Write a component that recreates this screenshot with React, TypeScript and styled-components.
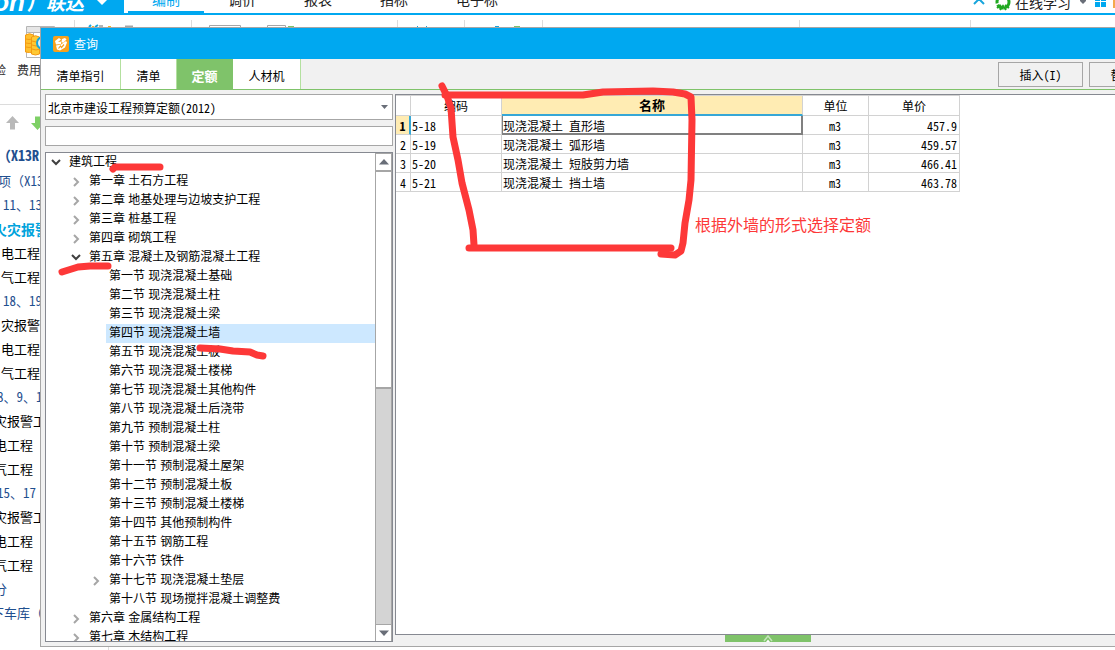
import React from "react";
import styled, { createGlobalStyle, css } from "styled-components";

const BLUE = "#00a8f0";
const GREEN = "#7fc36a";
const LINE = "#a6a6a6";
const DARK_LINE = "#868991";
const GRID = "#d2d2d2";
const RED = "#fd3838";
const NAVY = "#1f4f8f";

const GlobalStyle = createGlobalStyle`
  * { box-sizing: border-box; }
  html, body { margin: 0; padding: 0; background: #fff; }
  body, button, input, select, table {
    font-family: "Noto Sans CJK SC", sans-serif;
    font-size: 12px;
    color: #000;
  }
  button, input, select { margin: 0; padding: 0; border: 0; border-radius: 0; background: none; }
`;

const halfWidth = css`
  font-feature-settings: "hwid" 1;
`;

const Page = styled.div`
  position: relative;
  display: flex;
  flex-direction: column;
  height: 100vh;
  overflow: hidden;
  background: #fff;
`;

/* ---------- main window behind the dialog ---------- */

const AppHeader = styled.header`
  display: flex;
  align-items: flex-end;
  flex: none;
  height: 15px;
  overflow: hidden;
  border-bottom: 2px solid ${BLUE};
`;

const Brand = styled.div`
  display: flex;
  align-items: flex-end;
  justify-content: flex-end;
  flex: none;
  gap: 12px;
  width: 124px;
  height: 40px;
  margin-right: 4px;
  padding-right: 16px;
  background: ${BLUE};
  color: #fff;
  white-space: nowrap;

  > * { flex: none; }
`;

const BrandName = styled.span`
  display: flex;
  align-items: flex-end;
  gap: 2px;
  font-size: 19px;
  font-style: italic;
  font-weight: 700;
  line-height: 23px;
`;

const BrandLatin = styled.span`
  font: italic bold 26px/21px "Liberation Sans", sans-serif;
`;

const MainTab = styled.a<{ $active?: boolean }>`
  flex: none;
  padding: 0 24px 2px;
  font-size: 14px;
  line-height: 20px;
  text-decoration: none;
  color: ${(p) => (p.$active ? BLUE : "#222")};
  border-bottom: 2px solid ${(p) => (p.$active ? BLUE : "transparent")};
`;

const HeaderTools = styled.div`
  display: flex;
  align-items: flex-end;
  gap: 9px;
  height: 40px;
  margin-left: auto;
  font-size: 14px;
  line-height: 20px;
  white-space: nowrap;

  svg { display: block; flex: none; }
`;

const Learn = styled.a`
  display: flex;
  align-items: flex-end;
  gap: 3px;
  padding-bottom: 1px;
  color: #222;
  text-decoration: none;
`;

const Ribbon = styled.div`
  display: flex;
  flex: none;
  height: 90px;
  padding: 5px 0;
  border-bottom: 1px solid #dcdcdc;
`;

const RibbonGroup = styled.div<{ $width: number }>`
  display: flex;
  flex: none;
  align-items: flex-start;
  width: ${(p) => p.$width}px;
  overflow: hidden;
  border-right: 1px solid #dcdcdc;

  svg { display: block; }
`;

const RibbonItem = styled.div<{ $width: number; $pull?: number }>`
  flex: none;
  width: ${(p) => p.$width}px;
  margin-left: ${(p) => -(p.$pull ?? 0)}px;
  padding-top: 6px;
  color: #333;
  line-height: 18px;
  white-space: nowrap;
`;

const IconSlot = styled.span`
  display: block;
  height: 35px;
  padding-left: 8px;
`;

const Sidebar = styled.aside`
  flex: 1;
  width: 109px;
  min-height: 0;
  overflow: hidden;
  border-right: 1px solid #dcdcdc;
`;

const MoveBar = styled.div`
  display: flex;
  align-items: center;
  gap: 12px;
  height: 36px;
  padding-left: 6px;

  button, svg { display: block; }
`;

const ProjectList = styled.ul`
  margin: 0 0 0 -20px;
  padding: 0;
  list-style: none;
`;

const ProjectRow = styled.li<{ $indent: number; $tone: string; $strong?: boolean; $tall?: boolean }>`
  padding-left: ${(p) => p.$indent + 20}px;
  font-size: ${(p) => (p.$strong ? 14 : 13)}px;
  font-weight: ${(p) => (p.$strong ? 700 : 400)};
  line-height: ${(p) => (p.$tall ? 28 : 24)}px;
  color: ${(p) => p.$tone};
  white-space: nowrap;
`;

const HalfWidth = styled.span`
  ${halfWidth}
`;

/* ---------- dialog ---------- */

const Dialog = styled.section`
  position: absolute;
  top: 27px;
  bottom: 3px;
  left: 40px;
  right: -68px;
  display: flex;
  flex-direction: column;
  background: #f1f1f1;
  border: 1px solid ${LINE};
`;

const TitleBar = styled.header`
  display: flex;
  align-items: center;
  flex: none;
  gap: 5px;
  height: 31px;
  padding-left: 12px;
  background: ${BLUE};
  color: #fff;
  line-height: 18px;
`;

const TabBar = styled.div`
  display: flex;
  flex: none;
  height: 31px;
  border-bottom: 1px solid ${GREEN};
`;

const Tab = styled.button<{ $width: number; $active?: boolean }>`
  width: ${(p) => p.$width}px;
  padding-top: 2px;
  background: ${(p) => (p.$active ? GREEN : "#fff")};
  border-right: 1px solid ${(p) => (p.$active ? GREEN : "#b3e09f")};
  ${(p) => p.$active && "color: #fff; font-size: 13px; font-weight: 700;"}
`;

const Actions = styled.div`
  display: flex;
  gap: 6px;
  margin-left: auto;
  padding: 3px 8px 2px 0;
`;

const ActionButton = styled.button`
  width: 85px;
  height: 25px;
  border: 1px solid ${LINE};
  background: #f1f1f1;
  ${halfWidth}
`;

const Body = styled.div`
  display: flex;
  flex: 1;
  gap: 2px;
  min-height: 0;
  padding: 4px;
`;

const LeftPane = styled.div`
  display: flex;
  flex: none;
  flex-direction: column;
  gap: 6px;
  width: 348px;
  min-height: 0;
`;

const SelectBox = styled.div`
  display: grid;
  flex: none;
  height: 26px;
  background: #fff;
  border: 1px solid ${LINE};

  select, svg { grid-area: 1 / 1; }
  select {
    width: 100%;
    height: 100%;
    padding: 0 20px 0 2px;
    appearance: none;
    outline: none;
    ${halfWidth}
  }
  svg { place-self: center end; margin-right: 4px; pointer-events: none; }
`;

const SearchInput = styled.input`
  && {
    flex: none;
    height: 20px;
    padding: 0 3px;
    background: #fff;
    border: 1px solid ${LINE};
  }
`;

const TreeBox = styled.div`
  display: flex;
  flex: 1;
  min-height: 0;
  background: #fff;
  border: 1px solid ${DARK_LINE};
`;

const Tree = styled.ul`
  flex: 1;
  margin: 0;
  padding: 0;
  overflow: hidden;
  list-style: none;
  font-family: "Liberation Sans", "Noto Sans CJK SC", sans-serif;
`;

const TreeRow = styled.li<{ $level: number }>`
  display: flex;
  align-items: center;
  height: 19px;
  padding-left: ${(p) => p.$level * 20}px;
`;

const Twisty = styled.span`
  display: flex;
  align-items: center;
  justify-content: center;
  flex: none;
  width: 20px;
`;

const TreeLabel = styled.span<{ $selected?: boolean }>`
  flex: 1;
  padding-left: 3px;
  line-height: 19px;
  white-space: nowrap;
  background: ${(p) => (p.$selected ? "#cde8ff" : "transparent")};
`;

const ScrollBar = styled.div`
  display: flex;
  flex: none;
  flex-direction: column;
  width: 17px;
  background: #d4d4d4;
  border-left: 1px solid ${LINE};
  border-right: 1px solid ${LINE};
`;

const ScrollButton = styled.button`
  display: flex;
  align-items: center;
  justify-content: center;
  flex: none;
  height: 17px;
  background: #fff;
  border-top: 1px solid ${LINE};
`;

const Thumb = styled.div`
  flex: none;
  height: 219px;
  background: #fff;
  border: solid ${LINE};
  border-width: 2px 0;
`;

const ScrollSpace = styled.div`
  flex: 1;
`;

const RightPane = styled.div`
  display: flex;
  flex: 1;
  flex-direction: column;
  min-width: 0;
`;

const GridBox = styled.div`
  flex: 1;
  min-height: 0;
  background: #fff;
  border: 1px solid ${DARK_LINE};
`;

const Grid = styled.table`
  width: 564px;
  table-layout: fixed;
  border-spacing: 0;
  border-collapse: separate;
  ${halfWidth}

  th, td {
    height: 19px;
    padding: 2px 2px 0 1px;
    border: solid ${GRID};
    border-width: 0 1px 1px 0;
    font-weight: 400;
    line-height: 16px;
    text-align: left;
    white-space: nowrap;
  }
  thead th {
    height: 21px;
    padding: 0 2px;
    border-top-width: 1px;
    line-height: 18px;
    text-align: center;
  }
`;

const NameHead = styled.th`
  && {
    background: #ffecb3;
    border-bottom: 2px solid #36a7d6;
    font-weight: 700;
    font-size: 13px;
  }
`;

const RowNumber = styled.th<{ $current: boolean }>`
  && {
    padding: 2px 0 0;
    text-align: center;
    ${(p) => p.$current && "background: #ffecb3; border-right: 2px solid #36a7d6; font-weight: 700;"}
  }
`;

const NameCell = styled.td<{ $current: boolean }>`
  && {
    ${(p) =>
      p.$current &&
      "padding-left: 0; border-left: 1px solid #808080; border-right: 2px solid #808080; border-bottom: 2px solid #808080; line-height: 15px;"}
  }
`;

const UnitCell = styled.td`
  && { text-align: center; }
`;

const PriceCell = styled.td`
  && { text-align: right; }
`;

const Collapse = styled.button`
  display: flex;
  align-items: flex-start;
  justify-content: center;
  flex: none;
  width: 86px;
  height: 7px;
  margin-left: 330px;
  background: ${GREEN};
`;

/* ---------- hand-drawn notes over the window ---------- */

const Marks = styled.svg`
  position: absolute;
  top: 0;
  left: 0;
  pointer-events: none;
`;

const Note = styled.p`
  position: absolute;
  top: 212px;
  left: 695px;
  margin: 0;
  color: ${RED};
  font-size: 16px;
  line-height: 24px;
  white-space: nowrap;
`;

/* ---------- data ---------- */

type Project = { text: string; indent: number; tone?: string; strong?: boolean; tall?: boolean };

const projects: Project[] = [
  { text: "（X13R", indent: -3, tone: NAVY, strong: true, tall: true },
  { text: "项（X13", indent: -2, tone: NAVY },
  { text: "11、13", indent: 3, tone: NAVY },
  { text: "火灾报警", indent: -7, tone: "#00a3dc", strong: true },
  { text: "电工程", indent: 1 },
  { text: "气工程", indent: 1 },
  { text: "18、19", indent: 3, tone: NAVY },
  { text: "灾报警", indent: 1 },
  { text: "电工程", indent: 1 },
  { text: "气工程", indent: 1 },
  { text: "8、9、1", indent: -3, tone: NAVY },
  { text: "灾报警工", indent: -6 },
  { text: "电工程", indent: -6 },
  { text: "气工程", indent: -6 },
  { text: "15、17", indent: -3, tone: NAVY },
  { text: "灾报警工", indent: -6 },
  { text: "电工程", indent: -6 },
  { text: "气工程", indent: -6 },
  { text: "分", indent: -6, tone: NAVY },
  { text: "下车库（", indent: -9, tone: NAVY },
];

type Node = { text: string; level: number; state?: "open" | "closed"; selected?: boolean };

const nodes: Node[] = [
  { text: "建筑工程", level: 0, state: "open" },
  { text: "第一章 土石方工程", level: 1, state: "closed" },
  { text: "第二章 地基处理与边坡支护工程", level: 1, state: "closed" },
  { text: "第三章 桩基工程", level: 1, state: "closed" },
  { text: "第四章 砌筑工程", level: 1, state: "closed" },
  { text: "第五章 混凝土及钢筋混凝土工程", level: 1, state: "open" },
  { text: "第一节 现浇混凝土基础", level: 2 },
  { text: "第二节 现浇混凝土柱", level: 2 },
  { text: "第三节 现浇混凝土梁", level: 2 },
  { text: "第四节 现浇混凝土墙", level: 2, selected: true },
  { text: "第五节 现浇混凝土板", level: 2 },
  { text: "第六节 现浇混凝土楼梯", level: 2 },
  { text: "第七节 现浇混凝土其他构件", level: 2 },
  { text: "第八节 现浇混凝土后浇带", level: 2 },
  { text: "第九节 预制混凝土柱", level: 2 },
  { text: "第十节 预制混凝土梁", level: 2 },
  { text: "第十一节 预制混凝土屋架", level: 2 },
  { text: "第十二节 预制混凝土板", level: 2 },
  { text: "第十三节 预制混凝土楼梯", level: 2 },
  { text: "第十四节 其他预制构件", level: 2 },
  { text: "第十五节 钢筋工程", level: 2 },
  { text: "第十六节 铁件", level: 2 },
  { text: "第十七节 现浇混凝土垫层", level: 2, state: "closed" },
  { text: "第十八节 现场搅拌混凝土调整费", level: 2 },
  { text: "第六章 金属结构工程", level: 1, state: "closed" },
  { text: "第七章 木结构工程", level: 1, state: "closed" },
];

const quotas = [
  { code: "5-18", name: "现浇混凝土 直形墙", unit: "m3", price: "457.9" },
  { code: "5-19", name: "现浇混凝土 弧形墙", unit: "m3", price: "459.57" },
  { code: "5-20", name: "现浇混凝土 短肢剪力墙", unit: "m3", price: "466.41" },
  { code: "5-21", name: "现浇混凝土 挡土墙", unit: "m3", price: "463.78" },
];

/* Latin runs are set half-width; full-width punctuation keeps its own width. */
const MixedText = ({ text }: { text: string }) => (
  <>
    {text
      .split(/([A-Z0-9]+)/)
      .filter(Boolean)
      .map((part, i) => (/^[A-Z0-9]/.test(part) ? <HalfWidth key={i}>{part}</HalfWidth> : part))}
  </>
);

/* ---------- icons ---------- */

const Chevron = ({ open }: { open: boolean }) =>
  open ? (
    <svg width="10" height="7" viewBox="0 0 10 7" fill="none" stroke="#404040" strokeWidth="2">
      <path d="M1 1l4 4 4-4" />
    </svg>
  ) : (
    <svg width="7" height="10" viewBox="0 0 7 10" fill="none" stroke="#a6a6a6" strokeWidth="2">
      <path d="M1 1l4 4-4 4" />
    </svg>
  );

const Triangle = ({ up }: { up?: boolean }) => (
  <svg width="10" height="6" viewBox="0 0 10 6" fill="#696e78">
    <path d={up ? "M0 5.500L5 0l5 5.500z" : "M0 .5h10L5 6z"} />
  </svg>
);

const CoinsIcon = () => (
  <svg width="32" height="32" viewBox="0 0 32 32">
    <path d="M1.500 .5h28v31h-28z" fill="#fff" stroke="#b5b5b5" />
    <path d="M2 1h27v5H2z" fill="#e6e6e6" />
    <path d="M2 6.500h27M8.500 7v4M20.500 7v4" stroke="#b5b5b5" />
    <path d="M.5 9q4-2.500 8 0v17q-4 1-8 0z" fill="#ffc02e" stroke="#f39a12" />
    <path d="M6.500 11q4-2.500 8 0v17q-4 2-8 0z" fill="#ffc933" stroke="#f39a12" />
    <path d="M1 13q3 1 6 0M1 17q3 1 6 0M1 21q3 1 6 0M7 15q4 2 8 0M7 19q4 2 8 0M7 23q4 2 8 0" fill="none" stroke="#f39a12" />
    <circle cx="18" cy="17" r="6" fill="#d8f1fb" stroke="#18a5dc" strokeWidth="2" />
  </svg>
);

const LogoIcon = () => (
  <svg width="16" height="16" viewBox="0 0 16 16">
    <rect width="16" height="16" rx="2" fill="#f7a11c" />
    <path d="M2 5l4-3 2 1.500-3 2.500 3.500-.5L8 8l-5 .5z" fill="#fff" />
    <path d="M9 3l3-1 1.500 1.500L10 7 8.500 5.500z" fill="#fff" />
    <path d="M3 9.500l5-1 5-3.500 1 1.500-2 5-5 3-3-1z" fill="#fff" />
    <path d="M5.500 12.500l2-2.500 1 1.500 2.500-3" fill="none" stroke="#f7a11c" strokeWidth="1.200" />
  </svg>
);

export default function App() {
  return (
    <>
      <GlobalStyle />
      <Page>
        <AppHeader>
          <Brand>
            <BrandName>
              <BrandLatin>on</BrandLatin>
              广联达
            </BrandName>
            <svg width="12" height="14" viewBox="0 0 12 14" fill="#fff">
              <path d="M1 0h10v1L6 6 1 1z" />
            </svg>
          </Brand>
          <MainTab href="#" $active>编制</MainTab>
          <MainTab href="#">调价</MainTab>
          <MainTab href="#">报表</MainTab>
          <MainTab href="#">指标</MainTab>
          <MainTab href="#">电子标</MainTab>
          <HeaderTools>
            <svg width="12" height="18" viewBox="0 0 12 18" fill="none" stroke="#18a5dc" strokeWidth="2">
              <path d="M1 9l5-5 5 5" />
            </svg>
            <Learn href="#">
              <svg width="18" height="18" viewBox="0 0 18 18" fill="none" stroke="#21a821">
                <circle cx="9" cy="8" r="6" strokeWidth="3" strokeDasharray="7 1.500" />
                <path d="M3 14l4-3M15 14l-4-3M6 16l3-4 3 4" strokeWidth="2" />
              </svg>
              在线学习
            </Learn>
            <svg width="6" height="13" viewBox="0 0 6 13" fill="#696e78">
              <path d="M0 0h6v1L3 4 0 1z" />
            </svg>
            <svg width="20" height="17" viewBox="0 0 20 17">
              <path d="M0 0h5v5H0zM6 0h5v5H6zM0 6h5v5H0zM6 6h5v5H6z" fill={BLUE} />
              <path d="M18 4h2v8h-2z" fill="#f5a94c" />
            </svg>
          </HeaderTools>
        </AppHeader>

        <Ribbon>
          <RibbonGroup $width={75}>
            <RibbonItem $width={23} $pull={6}>
              <IconSlot />
              验
            </RibbonItem>
            <RibbonItem $width={48}>
              <IconSlot>
                <CoinsIcon />
              </IconSlot>
              费用
            </RibbonItem>
          </RibbonGroup>
          <RibbonGroup $width={117}>
            <svg width="116" height="12" viewBox="0 0 116 12" fill="none" strokeWidth="2">
              <path d="M14 7l2-2M20 7l3-2" stroke="#18a5dc" />
              <path d="M17 7h2M33 7h3" stroke="#f5b52c" />
              <path d="M24 6h4" stroke="#b5b5b5" />
              <path d="M50 6.500h8" stroke="#a6a6a6" />
            </svg>
          </RibbonGroup>
          <RibbonGroup $width={206}>
            <svg width="205" height="12" viewBox="0 0 205 12" fill="none">
              <path d="M17.500 10V5.500h31V10M75.500 10V5.500h18V10" stroke="#a6a6a6" />
              <path d="M96 6.500h6" stroke={GREEN} />
            </svg>
          </RibbonGroup>
          <RibbonGroup $width={67}>
            <svg width="66" height="12" viewBox="0 0 66 12" fill="#18a5dc">
              <path d="M19 6h1v1h-1zM28 6h1v1h-1z" />
            </svg>
          </RibbonGroup>
          <RibbonGroup $width={78}>
            <svg width="77" height="12" viewBox="0 0 77 12">
              <path d="M30 6h4v1h-4z" fill="#18a5dc" />
              <path d="M49 6h6v1h-6z" fill={GREEN} />
            </svg>
          </RibbonGroup>
          <RibbonGroup $width={257} />
          <RibbonGroup $width={171} />
        </Ribbon>

        <Sidebar>
          <MoveBar>
            <button type="button" aria-label="上移">
              <svg width="13" height="14" viewBox="0 0 13 14" fill="#b9b9b9">
                <path d="M6.500 0L13 7H9v6.500H4V7H0z" />
              </svg>
            </button>
            <button type="button" aria-label="下移">
              <svg width="13" height="14" viewBox="0 0 13 14" fill="#7ed066">
                <path d="M6.500 14L13 7H9V.5H4V7H0z" />
              </svg>
            </button>
          </MoveBar>
          <ProjectList>
            {projects.map((p, i) => (
              <ProjectRow key={i} $indent={p.indent} $tone={p.tone ?? "#000"} $strong={p.strong} $tall={p.tall}>
                <MixedText text={p.text} />
              </ProjectRow>
            ))}
          </ProjectList>
        </Sidebar>

        <Dialog role="dialog" aria-labelledby="dialog-title">
          <TitleBar>
            <LogoIcon />
            <span id="dialog-title">查询</span>
          </TitleBar>
          <TabBar>
            <Tab type="button" $width={80}>清单指引</Tab>
            <Tab type="button" $width={56}>清单</Tab>
            <Tab type="button" $width={56} $active>定额</Tab>
            <Tab type="button" $width={68}>人材机</Tab>
            <Actions>
              <ActionButton type="button">插入(I)</ActionButton>
              <ActionButton type="button">替换(R)</ActionButton>
            </Actions>
          </TabBar>
          <Body>
            <LeftPane>
              <SelectBox>
                <select aria-label="定额库" defaultValue="2012">
                  <option value="2012">北京市建设工程预算定额(2012)</option>
                </select>
                <svg width="7" height="4" viewBox="0 0 7 4" fill="#696e78">
                  <path d="M0 0h7L3.500 4z" />
                </svg>
              </SelectBox>
              <SearchInput type="text" aria-label="搜索" />
              <TreeBox>
                <Tree role="tree">
                  {nodes.map((n) => (
                    <TreeRow key={n.text} role="treeitem" aria-selected={!!n.selected} $level={n.level}>
                      <Twisty>{n.state && <Chevron open={n.state === "open"} />}</Twisty>
                      <TreeLabel $selected={n.selected}>{n.text}</TreeLabel>
                    </TreeRow>
                  ))}
                </Tree>
                <ScrollBar>
                  <ScrollButton type="button" aria-label="向上滚动">
                    <Triangle up />
                  </ScrollButton>
                  <Thumb />
                  <ScrollSpace />
                  <ScrollButton type="button" aria-label="向下滚动">
                    <Triangle />
                  </ScrollButton>
                </ScrollBar>
              </TreeBox>
            </LeftPane>
            <RightPane>
              <GridBox>
                <Grid>
                  <colgroup>
                    <col width="15" />
                    <col width="91" />
                    <col width="301" />
                    <col width="66" />
                    <col width="91" />
                  </colgroup>
                  <thead>
                    <tr>
                      <th />
                      <th scope="col">编码</th>
                      <NameHead scope="col">名称</NameHead>
                      <th scope="col">单位</th>
                      <th scope="col">单价</th>
                    </tr>
                  </thead>
                  <tbody>
                    {quotas.map((q, i) => (
                      <tr key={q.code}>
                        <RowNumber scope="row" $current={i === 0}>{i + 1}</RowNumber>
                        <td>{q.code}</td>
                        <NameCell $current={i === 0}>{q.name}</NameCell>
                        <UnitCell>{q.unit}</UnitCell>
                        <PriceCell>{q.price}</PriceCell>
                      </tr>
                    ))}
                  </tbody>
                </Grid>
              </GridBox>
              <Collapse type="button" aria-label="展开">
                <svg width="10" height="7" viewBox="0 0 10 7" fill="none">
                  <path d="M1 6l4-5 4 5" stroke="#c5e5bb" strokeWidth="1.500" />
                  <path d="M3 7l2-2.500L7 7z" fill="#fff" />
                </svg>
              </Collapse>
            </RightPane>
          </Body>
        </Dialog>

        <Marks width="720" height="370" viewBox="0 0 720 370" fill="none" stroke={RED} strokeWidth="7" strokeLinecap="round" strokeLinejoin="round">
          <path d="M442 86l5 10 4 12 2 29 5 23 4 23 7 27 4 20 1 15" />
          <path d="M445 95h138l20-3 50-1 20 1 12 2 6 3 1 23-1 60-2 20-4 23-2 20-2 8-6 4-14-1" />
          <path d="M469 248h202" />
          <path d="M113 169l2-2h45" />
          <path d="M62 272l16-5 12-1h18" />
          <path d="M200 348l20 1 13 2 17 1 7 3 6 1" />
        </Marks>
        <Note>根据外墙的形式选择定额</Note>
      </Page>
    </>
  );
}
